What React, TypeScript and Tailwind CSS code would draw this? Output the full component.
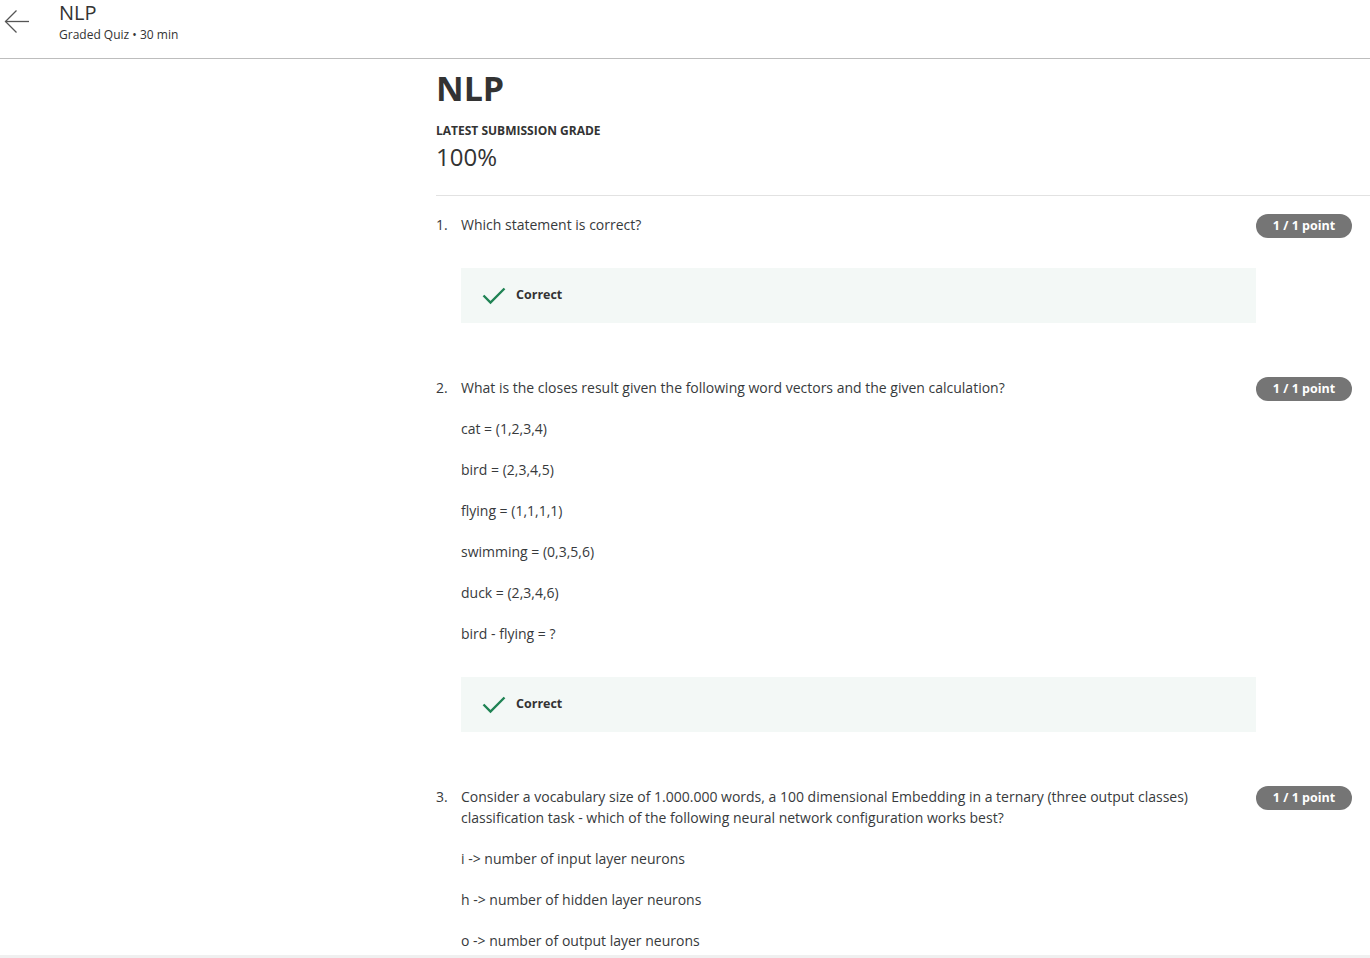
import React from "react"

type Question = {
  num: number
  text: string
  lines: string[]
  showResult: boolean
}

const questions: Question[] = [
  { num: 1, text: "Which statement is correct?", lines: [], showResult: true },
  {
    num: 2,
    text: "What is the closes result given the following word vectors and the given calculation?",
    lines: [
      "cat = (1,2,3,4)",
      "bird = (2,3,4,5)",
      "flying = (1,1,1,1)",
      "swimming = (0,3,5,6)",
      "duck = (2,3,4,6)",
      "bird - flying = ?",
    ],
    showResult: true,
  },
  {
    num: 3,
    text: "Consider a vocabulary size of 1.000.000 words, a 100 dimensional Embedding in a ternary (three output classes) classification task - which of the following neural network configuration works best?",
    lines: [
      "i -> number of input layer neurons",
      "h -> number of hidden layer neurons",
      "o -> number of output layer neurons",
    ],
    showResult: false,
  },
]

const BackArrow = () => (
  <svg width="26" height="24" viewBox="0 0 26 24" fill="none" stroke="#555" strokeWidth="1.3">
    <path d="M25 11.5H1.5" />
    <path d="M12.5 0.5L1.5 11.5L12.5 22.5" />
  </svg>
)

const Check = () => (
  <svg width="24" height="18" viewBox="0 0 24 18" fill="none" stroke="#1f8354" strokeWidth="2.4">
    <path d="M1.5 8.5L8.5 15.5L22.5 1.5" />
  </svg>
)

const QuestionBlock = ({ q }: { q: Question }) => {
  return (
    <div className="flex pb-[54px]">
      <div className="w-[25px] shrink-0 text-[14px] leading-[21px]">{q.num}.</div>
      <div className="flex-1">
        <div className="flex items-start">
          <p className="flex-1 pr-[40px] leading-[21px] mb-5">{q.text}</p>
          <div className="w-[96px] h-[24px] rounded-full bg-[#757575] text-white text-[12.5px] font-bold flex items-center justify-center">
            1 / 1 point
          </div>
        </div>
        <div className="mr-[96px] flex flex-col">
          {q.lines.map((l, i) => (
            <p key={i} className="leading-[21px] mb-5">{l}</p>
          ))}
          {q.showResult && (
            <div className="mt-[13px] h-[55px] bg-[#f3f8f6] flex items-center pl-[21px]">
              <Check />
              <span className="ml-[10px] text-[12.5px] font-bold text-[#333]">Correct</span>
            </div>
          )}
        </div>
      </div>
    </div>
  )
}

export default function App() {
  return (
    <div className="w-[1370px] h-[958px] overflow-hidden bg-white text-[#373a3c] text-[14px] flex flex-col" style={{ fontFamily: '"Open Sans", sans-serif' }}>
      <header className="h-[59px] shrink-0 border-b border-[#bdbdbd] flex items-start">
        <div className="pl-[4px] pt-[10px] w-[59px]">
          <BackArrow />
        </div>
        <div>
          <div className="text-[20px] leading-[24px] text-[#333] pt-[1px]">NLP</div>
          <div className="text-[12px] leading-[16px] text-[#333] mt-[2px]">Graded Quiz • 30 min</div>
        </div>
      </header>
      <main className="flex-1 overflow-hidden pl-[436px]">
        <h1 className="text-[34px] leading-[42px] font-bold text-[#333] mt-[8px]">NLP</h1>
        <div className="text-[12px] font-bold text-[#333] uppercase mt-[13px] leading-[17px]">Latest submission grade</div>
        <div className="text-[24px] leading-[32px] text-[#333] mt-[2px]">100%</div>
        <div className="border-b border-[#e2e2e2] mt-[22px]" />
        <div className="pt-[18px] pr-[18px]">
          {questions.map((q) => (
            <QuestionBlock key={q.num} q={q} />
          ))}
        </div>
      </main>
      <div className="h-[3px] shrink-0 bg-[#f0f0f0]" />
    </div>
  )
}
